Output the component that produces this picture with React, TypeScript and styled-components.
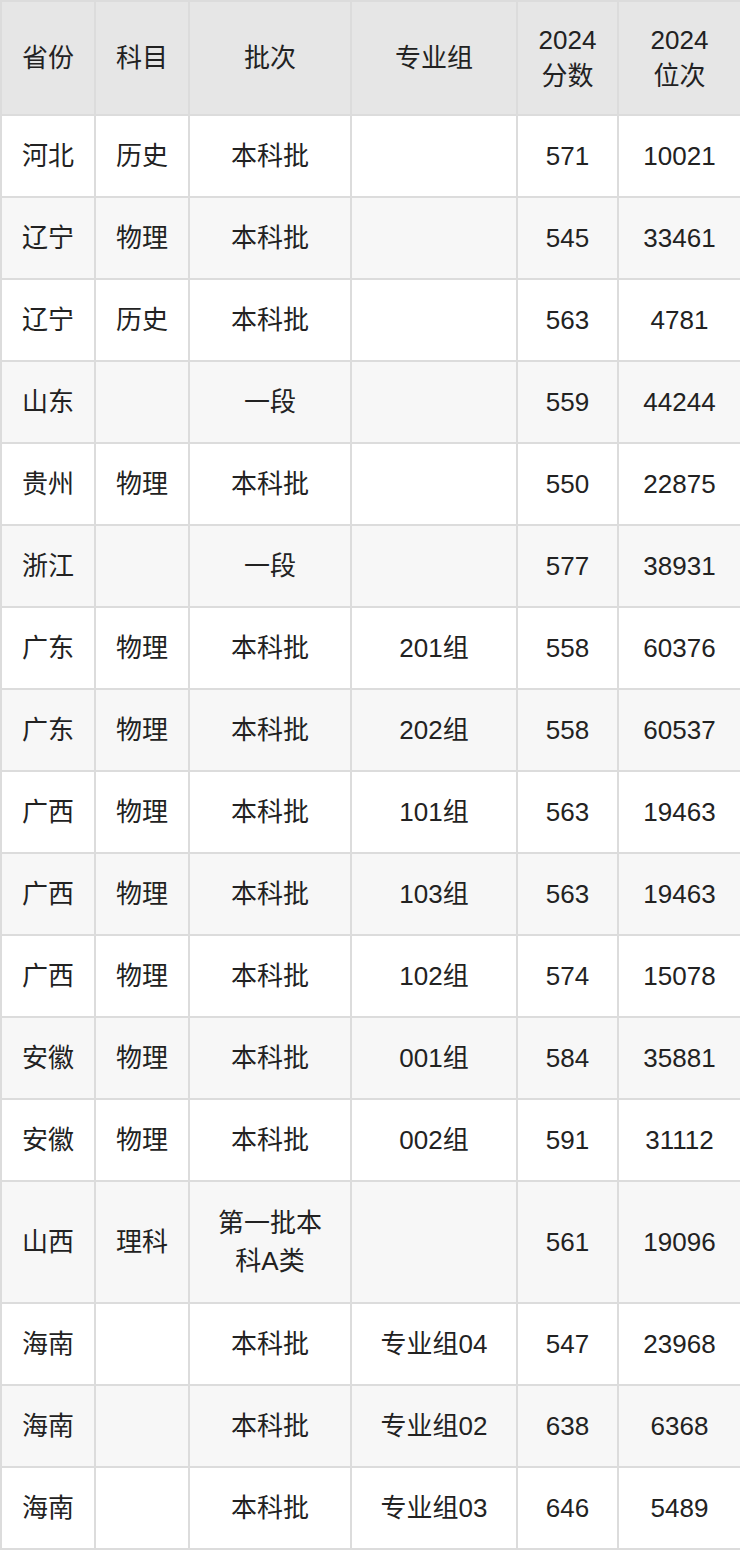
import React from 'react';
import styled, { createGlobalStyle } from 'styled-components';

const GlobalStyle = createGlobalStyle`
  body {
    margin: 0;
    background: #fff;
    font-family: "Liberation Sans", "Noto Sans CJK SC", sans-serif;
  }
`;

const Table = styled.table`
  width: 740px;
  table-layout: fixed;
  border-collapse: collapse;
  color: #222;
  font-size: 26px;
  line-height: 38px;
`;

const HeadRow = styled.tr`
  height: 114px;
  background: #e6e6e6;
`;

const Row = styled.tr<{ $tall?: boolean; $striped?: boolean }>`
  height: ${(p) => (p.$tall ? '122px' : '82px')};
  background: ${(p) => (p.$striped ? '#f7f7f7' : '#fff')};
`;

const Th = styled.th`
  border: 2px solid #dcdcdc;
  padding: 0 20px;
  font-weight: normal;
  text-align: center;
  vertical-align: middle;
  line-height: 36px;
`;

const Td = styled.td`
  border: 2px solid #dcdcdc;
  padding: 0 20px;
  text-align: center;
  vertical-align: middle;
`;

const widths = [94, 94, 162, 166, 101, 123];
const headers = ['省份', '科目', '批次', '专业组', '2024分数', '2024位次'];

const rows = [
  ['河北', '历史', '本科批', '', '571', '10021'],
  ['辽宁', '物理', '本科批', '', '545', '33461'],
  ['辽宁', '历史', '本科批', '', '563', '4781'],
  ['山东', '', '一段', '', '559', '44244'],
  ['贵州', '物理', '本科批', '', '550', '22875'],
  ['浙江', '', '一段', '', '577', '38931'],
  ['广东', '物理', '本科批', '201组', '558', '60376'],
  ['广东', '物理', '本科批', '202组', '558', '60537'],
  ['广西', '物理', '本科批', '101组', '563', '19463'],
  ['广西', '物理', '本科批', '103组', '563', '19463'],
  ['广西', '物理', '本科批', '102组', '574', '15078'],
  ['安徽', '物理', '本科批', '001组', '584', '35881'],
  ['安徽', '物理', '本科批', '002组', '591', '31112'],
  ['山西', '理科', '第一批本科A类', '', '561', '19096'],
  ['海南', '', '本科批', '专业组04', '547', '23968'],
  ['海南', '', '本科批', '专业组02', '638', '6368'],
  ['海南', '', '本科批', '专业组03', '646', '5489'],
];

export default function App() {
  return (
    <>
      <GlobalStyle />
      <Table>
        <colgroup>
          {widths.map((w, i) => (
            <col key={i} style={{ width: w }} />
          ))}
        </colgroup>
        <thead>
          <HeadRow>
            {headers.map((h) => (
              <Th key={h}>{h}</Th>
            ))}
          </HeadRow>
        </thead>
        <tbody>
          {rows.map((r, i) => (
            <Row key={i} $striped={i % 2 === 1} $tall={r[2].length > 4}>
              {r.map((c, j) => (
                <Td key={j}>{c}</Td>
              ))}
            </Row>
          ))}
        </tbody>
      </Table>
    </>
  );
}
